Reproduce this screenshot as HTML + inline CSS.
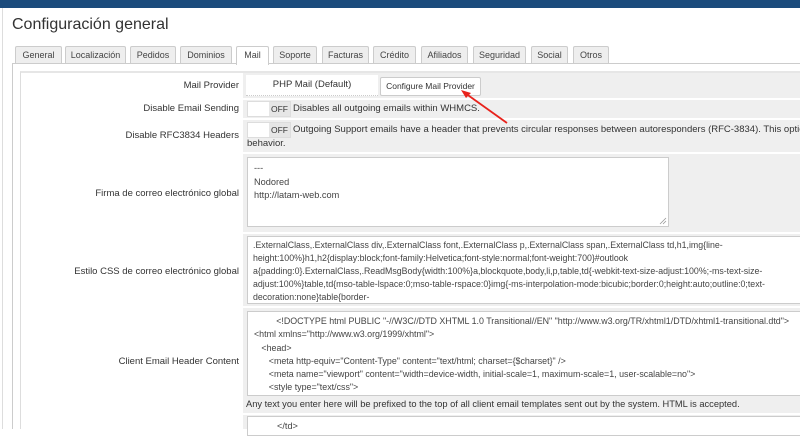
<!DOCTYPE html>
<html><head><meta charset="utf-8"><style>
*{box-sizing:border-box;margin:0;padding:0}
body{width:800px;height:429px;overflow:hidden;background:#fff;font-family:"Liberation Sans",sans-serif;color:#333;position:relative}
.a{position:absolute}
.tab{position:absolute;top:46px;height:18px;border:1px solid #ccc;border-bottom:none;background:#eee;font-size:9px;color:#444;text-align:center;line-height:17px;border-radius:2px 2px 0 0;white-space:nowrap;overflow:hidden}
.lab{position:absolute;left:20px;width:219px;text-align:right;font-size:9.5px;color:#333}
.val{position:absolute;left:243px;right:0;background:#efefef}
.ta{position:absolute;background:#fff;border:1px solid #ccc;font-size:9.2px;color:#444;overflow:hidden;white-space:nowrap}
.tog{position:absolute;width:44px;height:16px;border:1px solid #ddd;background:#fff}
.tog span{position:absolute;right:0;top:0;width:21px;height:14px;background:#e6e6e6;font-size:8.5px;line-height:14px;text-align:center;color:#333}
</style></head><body>
<div class="a" style="left:0;top:0;width:800px;height:8px;background:#1b4b7c"></div>
<div class="a" style="left:2px;top:8px;width:1px;height:421px;background:#ddd"></div>
<div class="a" style="left:12px;top:16px;font-size:16px;color:#333">Configuración general</div>
<div class="tab" style="left:15px;width:47px">General</div>
<div class="tab" style="left:65px;width:61px">Localización</div>
<div class="tab" style="left:130px;width:46px">Pedidos</div>
<div class="tab" style="left:180px;width:52px">Dominios</div>
<div class="tab" style="left:236px;width:33px;background:#fff;height:19px;z-index:2">Mail</div>
<div class="tab" style="left:273px;width:44px">Soporte</div>
<div class="tab" style="left:322px;width:47px">Facturas</div>
<div class="tab" style="left:373px;width:43px">Crédito</div>
<div class="tab" style="left:421px;width:47px">Afiliados</div>
<div class="tab" style="left:473px;width:53px">Seguridad</div>
<div class="tab" style="left:531px;width:37px">Social</div>
<div class="tab" style="left:573px;width:36px">Otros</div>
<div class="a" style="left:12px;top:63px;width:788px;height:366px;border-left:1px solid #ccc;border-top:1px solid #ccc"></div>
<div class="a" style="left:20px;top:71px;width:780px;height:358px;border-left:1px solid #ddd;border-top:2px solid #e6e6e6"></div>

<div class="lab" style="top:80px">Mail Provider</div>
<div class="val" style="top:73px;height:25px"></div>
<div class="a" style="left:246px;top:75px;width:132px;height:21px;background:#fff;border-bottom:1px dotted #ccc;font-size:9.5px;text-align:center;line-height:20px">PHP Mail (Default)</div>
<div class="a" style="left:380px;top:77px;width:101px;height:19px;background:#fff;border:1px solid #ccc;border-radius:2px;font-size:8.5px;text-align:center;line-height:17px">Configure Mail Provider</div>

<div class="lab" style="top:103px">Disable Email Sending</div>
<div class="val" style="top:100px;height:18px"></div>
<div class="tog" style="left:247px;top:101px"><span>OFF</span></div>
<div class="a" style="left:293px;top:103px;font-size:9.5px">Disables all outgoing emails within WHMCS.</div>

<div class="lab" style="top:130px">Disable RFC3834 Headers</div>
<div class="val" style="top:120px;height:32px"></div>
<div class="tog" style="left:247px;top:122px"><span>OFF</span></div>
<div class="a" style="left:293px;top:124px;font-size:9.5px;white-space:nowrap">Outgoing Support emails have a header that prevents circular responses between autoresponders (RFC-3834). This option</div>
<div class="a" style="left:247px;top:138px;font-size:9.5px">behavior.</div>

<svg class="a" style="left:455px;top:85px" width="60" height="45"><line x1="52" y1="38" x2="10" y2="8" stroke="#e8221b" stroke-width="1.8"/><polygon points="6,5 16,8 11,13" fill="#e8221b"/></svg>

<div class="lab" style="top:188px">Firma de correo electrónico global</div>
<div class="val" style="top:154px;height:78px"></div>
<div class="ta" style="left:247px;top:157px;width:422px;height:70px;padding:4px 6px;line-height:13.5px">---<br>Nodored<br>http://latam-web.com</div>
<svg class="a" style="left:659px;top:217px" width="8" height="8"><path d="M7 1L1 7M7 4L4 7" stroke="#999" stroke-width="0.8"/></svg>

<div class="lab" style="top:266px">Estilo CSS de correo electrónico global</div>
<div class="val" style="top:234px;height:72px"></div>
<div class="ta" style="left:247px;top:236px;width:560px;height:68px;padding:2px 5px;line-height:13px;font-size:8.8px">.ExternalClass,.ExternalClass div,.ExternalClass font,.ExternalClass p,.ExternalClass span,.ExternalClass td,h1,img{line-<br>height:100%}h1,h2{display:block;font-family:Helvetica;font-style:normal;font-weight:700}#outlook<br>a{padding:0}.ExternalClass,.ReadMsgBody{width:100%}a,blockquote,body,li,p,table,td{-webkit-text-size-adjust:100%;-ms-text-size-<br>adjust:100%}table,td{mso-table-lspace:0;mso-table-rspace:0}img{-ms-interpolation-mode:bicubic;border:0;height:auto;outline:0;text-<br>decoration:none}table{border-</div>

<div class="lab" style="top:356px">Client Email Header Content</div>
<div class="val" style="top:308px;height:105px"></div>
<div class="ta" style="left:247px;top:311px;width:560px;height:85px;padding:3px 6px;line-height:13.3px;font-size:8.9px">&nbsp; &nbsp; &nbsp; &nbsp; &nbsp;&lt;!DOCTYPE html PUBLIC "-//W3C//DTD XHTML 1.0 Transitional//EN" "http://www.w3.org/TR/xhtml1/DTD/xhtml1-transitional.dtd"&gt;<br>&lt;html xmlns="http://www.w3.org/1999/xhtml"&gt;<br>&nbsp; &nbsp;&lt;head&gt;<br>&nbsp; &nbsp; &nbsp; &lt;meta http-equiv="Content-Type" content="text/html; charset={$charset}" /&gt;<br>&nbsp; &nbsp; &nbsp; &lt;meta name="viewport" content="width=device-width, initial-scale=1, maximum-scale=1, user-scalable=no"&gt;<br>&nbsp; &nbsp; &nbsp; &lt;style type="text/css"&gt;</div>
<div class="a" style="left:246px;top:399px;font-size:9.3px;white-space:nowrap">Any text you enter here will be prefixed to the top of all client email templates sent out by the system. HTML is accepted.</div>

<div class="val" style="top:415px;height:14px"></div>
<div class="ta" style="left:247px;top:416px;width:560px;height:20px;padding:3px 6px;line-height:13px">&nbsp; &nbsp; &nbsp; &nbsp; &nbsp;&lt;/td&gt;</div>
</body></html>
